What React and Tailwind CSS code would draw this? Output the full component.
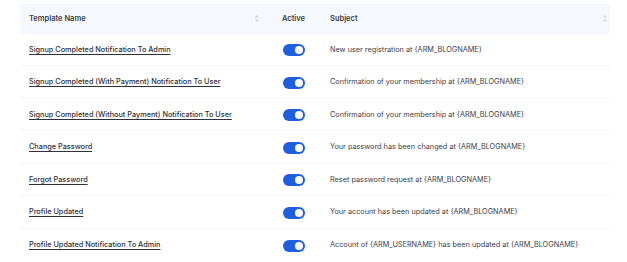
import React from "react";

const rows = [
  ["Signup Completed Notification To Admin", "New user registration at {ARM_BLOGNAME}"],
  ["Signup Completed (With Payment) Notification To User", "Confirmation of your membership at {ARM_BLOGNAME}"],
  ["Signup Completed (Without Payment) Notification To User", "Confirmation of your membership at {ARM_BLOGNAME}"],
  ["Change Password", "Your password has been changed at {ARM_BLOGNAME}"],
  ["Forgot Password", "Reset password request at {ARM_BLOGNAME}"],
  ["Profile Updated", "Your account has been updated at {ARM_BLOGNAME}"],
  ["Profile Updated Notification To Admin", "Account of {ARM_USERNAME} has been updated at {ARM_BLOGNAME}"],
];

function SortIcon() {
  return (
    <svg width="4" height="7" viewBox="0 0 4 7" className="shrink-0">
      <path d="M2 0 L4 2.5 L0 2.5 Z" fill="#d4d7de" />
      <path d="M2 7 L4 4.5 L0 4.5 Z" fill="#d4d7de" />
    </svg>
  );
}

function Toggle() {
  return (
    <div className="w-[22px] h-[12px] rounded-full bg-[#1d5fe0] flex items-center justify-end pr-[2px]">
      <div className="w-[8px] h-[8px] rounded-full bg-white" />
    </div>
  );
}

export default function App() {
  return (
    <div
      className="w-[627px] h-[262px] bg-white pt-[3.5px] pl-[20px] overflow-hidden"
      style={{ fontFamily: "Inter, 'Noto Sans', sans-serif" }}
    >
      <div className="w-[590px]">
        <div className="grid grid-cols-[253px_48px_1fr] h-[30px] bg-[#f5f8fe] items-center text-[7.5px] font-semibold text-[#3a3d45]">
          <div className="pl-[9px] pr-[14px] flex items-center justify-between">
            <span>Template Name</span>
            <SortIcon />
          </div>
          <div className="pl-[9px]">Active</div>
          <div className="pl-[9px] pr-[3px] flex items-center justify-between">
            <span>Subject</span>
            <SortIcon />
          </div>
        </div>
        {rows.map(([name, subject], i) => (
          <div
            key={i}
            className={`grid grid-cols-[253px_48px_1fr] h-[32.5px] items-center text-[7.3px] pt-[1.5px] ${i < rows.length - 1 ? "border-b border-[#f3f4f7]" : ""}`}
          >
            <div className="pl-[9px]">
              <span className="underline underline-offset-[1.5px] text-[#2f323a] font-medium">{name}</span>
            </div>
            <div className="pl-[10px]">
              <Toggle />
            </div>
            <div className="pl-[9px] text-[#3d4048]">{subject}</div>
          </div>
        ))}
      </div>
    </div>
  );
}
